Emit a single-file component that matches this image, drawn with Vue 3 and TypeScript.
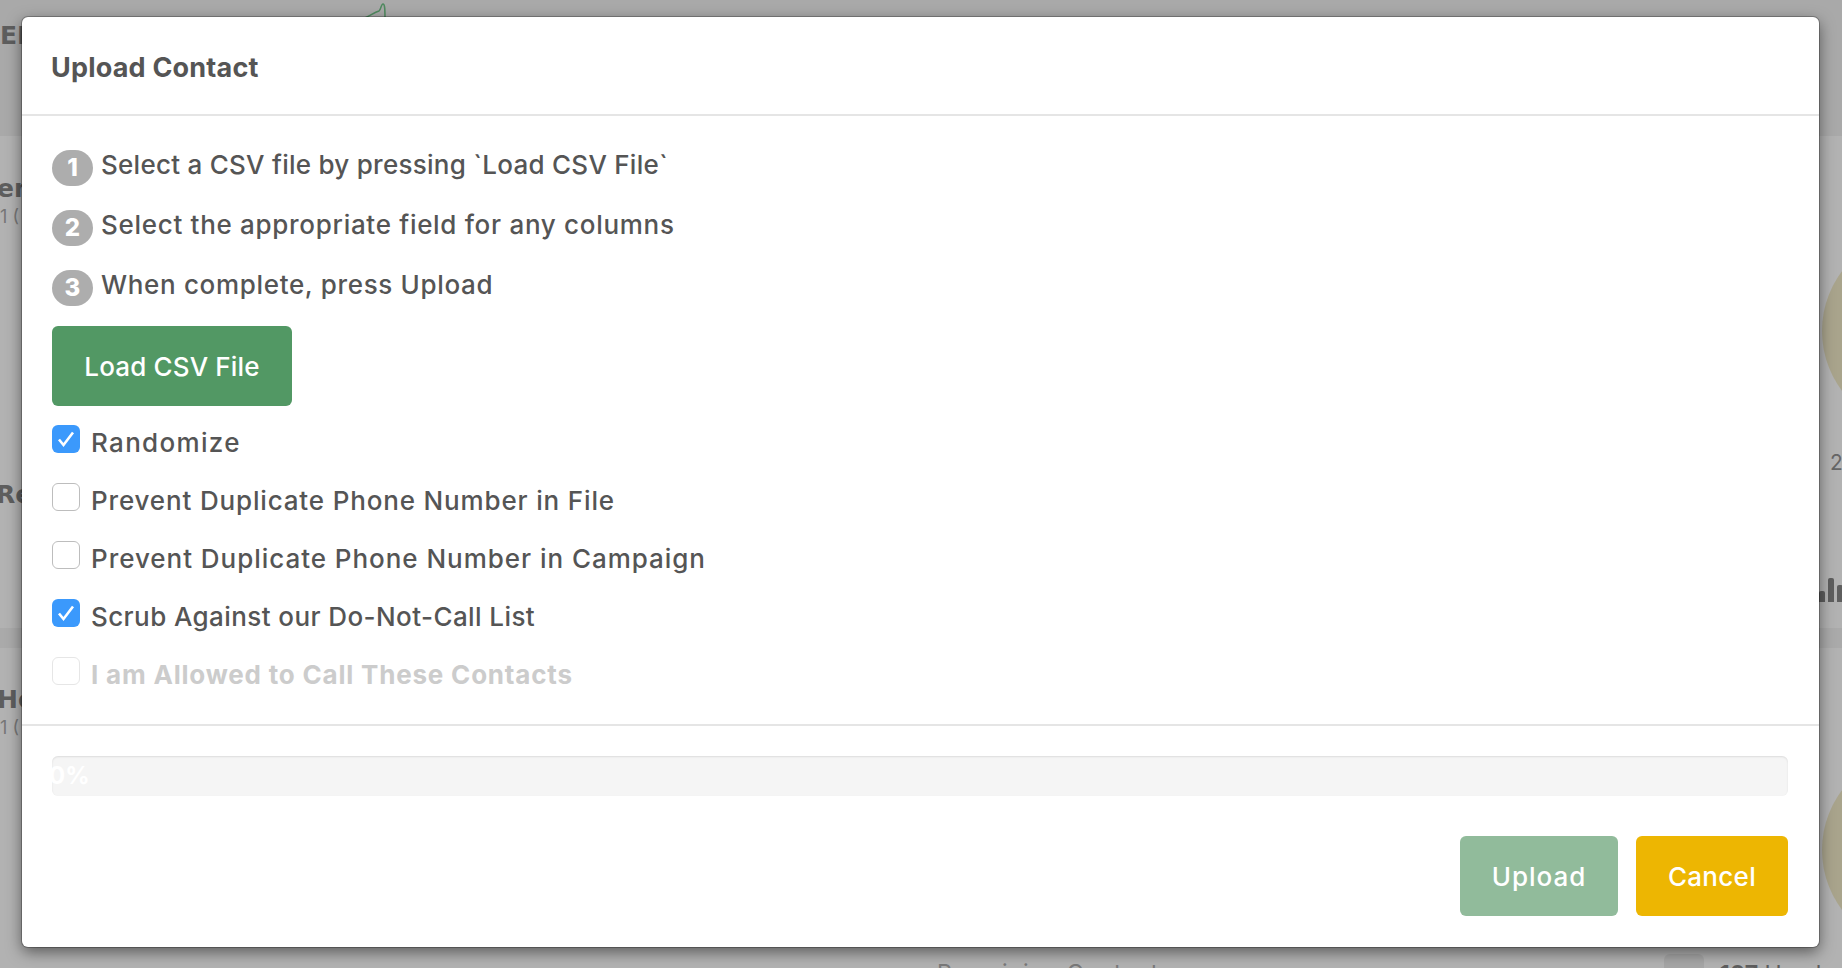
<script setup lang="ts">
interface Step { text: string; spacing: number }
const steps: Step[] = [
  { text: 'Select a CSV file by pressing `Load CSV File`', spacing: 0.26 },
  { text: 'Select the appropriate field for any columns', spacing: 0.7 },
  { text: 'When complete, press Upload', spacing: 0.67 },
]
interface Opt { label: string; checked: boolean; spacing: number; disabled?: boolean }
const options: Opt[] = [
  { label: 'Randomize', checked: true, spacing: 1.33 },
  { label: 'Prevent Duplicate Phone Number in File', checked: false, spacing: 0.84 },
  { label: 'Prevent Duplicate Phone Number in Campaign', checked: false, spacing: 0.96 },
  { label: 'Scrub Against our Do-Not-Call List', checked: true, spacing: 0.41 },
  { label: 'I am Allowed to Call These Contacts', checked: false, spacing: 0.8, disabled: true },
]
</script>

<template>
  <div class="page">
    <div class="bg">
      <section class="band top">
        <span class="crumb big first">EE</span>
        <svg class="spark" width="60" height="18" viewBox="0 0 60 18">
          <path d="M0 17 H20 C30 17 36 10 43 8 C45 7 45 1 47 1 C49 1 49 6 49 18" fill="none" stroke="#4f8a5f" stroke-width="1.5" />
        </svg>
      </section>
      <section class="band middle">
        <div class="left">
          <span class="crumb big en">en</span>
          <span class="crumb small">1 (</span>
          <span class="crumb big re">Re</span>
        </div>
        <div class="right">
          <div class="disc"></div>
          <span class="two">2</span>
          <div class="bars"><i class="b1"></i><i class="b2"></i><i class="b3"></i></div>
        </div>
      </section>
      <div class="strip"></div>
      <section class="band lower">
        <div class="left">
          <span class="crumb big ho">Ho</span>
          <span class="crumb small">1 (</span>
        </div>
        <div class="right">
          <div class="disc second"></div>
        </div>
      </section>
      <section class="band foot">
        <span class="remain">Remaining Contacts:</span>
        <span class="square"></span>
        <span class="used"><b>107</b> Used</span>
      </section>
    </div>

    <div class="modal">
      <header class="head"><h4>Upload Contact</h4></header>
      <div class="body">
        <div v-for="(s, i) in steps" :key="i" class="step">
          <span class="badge">{{ i + 1 }}</span>
          <span class="step-text" :style="{ letterSpacing: s.spacing + 'px' }">{{ s.text }}</span>
        </div>
        <button class="btn load">Load CSV File</button>
        <div class="opts">
          <label v-for="o in options" :key="o.label" class="opt" :class="{ off: o.disabled }">
            <span class="box" :class="{ on: o.checked }">
              <svg v-if="o.checked" width="28" height="28" viewBox="0 0 28 28">
                <path d="M7 14.5 L11.5 20 L21 7.5" fill="none" stroke="#fff" stroke-width="2.6" />
              </svg>
            </span>
            <span class="opt-text" :style="{ letterSpacing: o.spacing + 'px' }">{{ o.label }}</span>
          </label>
        </div>
      </div>
      <footer class="foot-area">
        <div class="progress"><span>0%</span></div>
        <div class="actions">
          <button class="btn upload">Upload</button>
          <button class="btn cancel">Cancel</button>
        </div>
      </footer>
    </div>
  </div>
</template>

<style>
html, body { margin: 0; overflow: hidden; }
</style>

<style scoped>
.page {
  position: relative;
  width: 1842px;
  height: 968px;
  overflow: hidden;
  background: #b2b2b2;
  font-family: Inter, "Liberation Sans", sans-serif;
  color: #555;
}
.bg { display: flex; flex-direction: column; height: 100%; }
.band { display: flex; justify-content: space-between; overflow: hidden; flex: none; }
.top { height: 136px; background: #a9a9a9; }
.middle { height: 492px; }
.strip { height: 20px; background: #aaaaaa; flex: none; }
.lower { height: 306px; }
.foot { flex: 1; padding-left: 937px; align-items: flex-start; color: #7a7a7a; font-size: 23px; justify-content: flex-start; }
.left { display: flex; flex-direction: column; width: 22px; overflow: hidden; }
.right { width: 20px; display: flex; flex-direction: column; }
.crumb { white-space: nowrap; color: #5e5e5e; }
.big { font-family: "DejaVu Sans", sans-serif; font-weight: 700; font-size: 25px; line-height: 30px; }
.small { font-size: 18px; line-height: 22px; color: #777; margin-top: 2px; }
.first { margin: 21px 0 0; }
.spark { margin: 3px 1446px 0 0; }
.en { margin-top: 38px; text-indent: -3px; }
.re { margin-top: 252px; text-indent: -4px; }
.ho { margin-top: 37px; text-indent: -3px; }
.disc {
  width: 180px;
  height: 190px;
  margin-top: 100px;
  flex: none;
  border-radius: 50%;
  background: #a9a48c;
}
.second { margin-top: 107px; }
.two { margin: 25px 0 0 8px; font-size: 21px; line-height: 24px; color: #666; }
.bars { display: flex; align-items: flex-end; gap: 3px; margin-top: 103px; margin-left: -3px; height: 24px; }
.bars i { width: 6px; flex: none; background: #5e5e5e; border-radius: 2px 2px 0 0; }
.b1 { height: 11px; }
.b2 { height: 24px; }
.b3 { height: 17px; }
.remain { margin-top: 5px; white-space: nowrap; letter-spacing: 1px; }
.square { width: 40px; height: 40px; margin: 0 0 0 484px; background: #a6a6a6; border-radius: 6px; flex: none; }
.used { margin: 6px 0 0 16px; white-space: nowrap; color: #5e5e5e; }

.modal {
  position: absolute;
  left: 22px;
  top: 17px;
  width: 1797px;
  height: 930px;
  box-sizing: border-box;
  background: #fff;
  border-radius: 6px;
  box-shadow: 0 0 0 1px rgba(0, 0, 0, .25), 0 5px 15px rgba(0, 0, 0, .5);
  display: flex;
  flex-direction: column;
}
.head { height: 99px; box-sizing: border-box; padding: 3px 29px 0; border-bottom: 2px solid #e5e5e5; flex: none; display: flex; align-items: center; }
h4 { margin: 0; font-size: 27px; font-weight: 700; color: #555; letter-spacing: .2px; }
.body { padding: 34px 31px 0 30px; display: flex; flex-direction: column; align-items: flex-start; height: 610px; box-sizing: border-box; flex: none; border-bottom: 2px solid #e5e5e5; }
.step { display: flex; height: 60px; align-items: flex-start; gap: 8px; flex: none; }
.badge {
  width: 41px;
  height: 36px;
  border-radius: 18px;
  background: #adadad;
  color: #fff;
  font-weight: 800;
  font-size: 24px;
  line-height: 36px;
  text-align: center;
  flex: none;
}
.step-text { font-size: 26px; font-weight: 500; line-height: 30px; color: #555; white-space: nowrap; }
.btn {
  border: 0;
  border-radius: 6px;
  color: #fff;
  font-family: inherit;
  font-size: 26px;
  font-weight: 500;
  height: 80px;
  padding: 0;
  flex: none;
}
.load { width: 240px; background: #529864; margin-top: -4px; letter-spacing: .15px; }
.opts { display: flex; flex-direction: column; margin-top: 19px; flex: none; }
.opt { display: flex; height: 58px; align-items: flex-start; gap: 11px; }
.box { width: 28px; height: 28px; box-sizing: border-box; border: 1.5px solid #bdbdbd; border-radius: 6px; background: #fff; flex: none; }
.box.on { border: 0; background: #3b99fc; }
.opt-text { font-size: 26px; font-weight: 500; line-height: 30px; color: #555; margin-top: 3px; white-space: nowrap; }
.off .box { border-color: #e6e6e6; }
.off .opt-text { color: #ccc; font-weight: 700; }
.foot-area { padding: 30px 31px 0 30px; flex: 1; display: flex; flex-direction: column; }
.progress { height: 40px; background: #f5f5f5; border-radius: 6px; box-shadow: inset 0 1px 2px rgba(0, 0, 0, .1); overflow: hidden; flex: none; }
.progress span { display: block; margin-left: -3px; color: #fff; font-weight: 700; font-size: 24px; line-height: 40px; }
.actions { display: flex; justify-content: flex-end; gap: 18px; margin-top: 40px; }
.upload { width: 158px; background: #91bb9b; letter-spacing: 1px; }
.cancel { width: 152px; background: #edb602; letter-spacing: .3px; }
</style>
